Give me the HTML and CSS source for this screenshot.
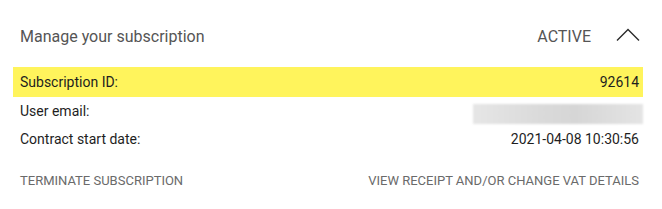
FILE: index.html
```html
<!DOCTYPE html>
<html lang="en">
<head>
  <meta charset="UTF-8">
  <title>Manage your subscription</title>
  <link rel="stylesheet" href="styles.css">
</head>
<body>

  <div class="card">
    <!-- Header -->
    <div class="card-header">
      <span class="title">Manage your subscription</span>
      <div class="status">
        <span class="status-label">ACTIVE</span>
        <svg class="chevron" width="24" height="13" viewBox="0 0 24 13">
          <polyline points="1,12.5 12,1.5 23,12.5" fill="none" stroke="#2b2b2b" stroke-width="1.4"/>
        </svg>
      </div>
    </div>

    <!-- Details -->
    <div class="details">
      <div class="row highlight">
        <span>Subscription ID:</span>
        <span>92614</span>
      </div>
      <div class="row">
        <span>User email:</span>
        <span class="hidden-value"></span>
      </div>
      <div class="row">
        <span>Contract start date:</span>
        <span>2021-04-08 10:30:56</span>
      </div>
    </div>

    <!-- Actions -->
    <div class="actions">
      <a href="#" class="action-link">Terminate subscription</a>
      <a href="#" class="action-link">View receipt and/or change VAT details</a>
    </div>
  </div>

</body>
</html>
```

FILE: styles.css
```css
body {
  font-family: Roboto, "Liberation Sans", sans-serif;
  background-color: #ffffff;
  margin: 0;
}

.card {
  padding: 25px 19px 0 13px;
}

.card-header {
  display: flex;
  justify-content: space-between;
  align-items: center;
  height: 24px;
  padding: 0 3px 0 7px;
  margin-bottom: 18px;
}

.title {
  font-size: 16px;
  line-height: 24px;
  color: #555555;
}

.status {
  display: flex;
  align-items: center;
}

.status-label {
  font-size: 16px;
  line-height: 24px;
  color: #555555;
  margin-right: 25px;
}

.chevron {
  display: block;
  margin-top: -5px;
}

.row {
  display: flex;
  justify-content: space-between;
  align-items: center;
  height: 28px;
  padding: 0 4px 0 7px;
  font-size: 14px;
  color: #1e1e1e;
}

.row.highlight {
  height: 30px;
  background-color: #fff45c;
}

.hidden-value {
  width: 170px;
  height: 20px;
  margin-right: -4px;
  margin-top: 6px;
  background: linear-gradient(90deg, #e6e6e6, #dadada 40%, #d6d6d6 60%, #e4e4e4);
  filter: blur(1px);
}

.actions {
  display: flex;
  justify-content: space-between;
  padding: 0 4px 0 7px;
  margin-top: 18px;
}

.action-link {
  font-size: 13px;
  line-height: 20px;
  color: #6a6a6a;
  text-transform: uppercase;
  text-decoration: none;
}
```
